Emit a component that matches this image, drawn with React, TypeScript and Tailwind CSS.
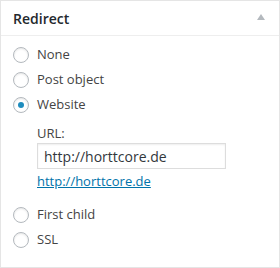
import React from "react";

function Radio({ checked = false, label }: { checked?: boolean; label: string }) {
  return (
    <div className="flex items-center h-[25px]">
      <span className="ml-[12px] w-[16px] h-[16px] rounded-full border border-[#b4b9be] bg-white shadow-[inset_0_1px_2px_rgba(0,0,0,0.1)] flex items-center justify-center shrink-0">
        {checked && <span className="w-[6px] h-[6px] rounded-full bg-[#1e8cbe]" />}
      </span>
      <span className="ml-[8px] text-[13px] text-[#444]">{label}</span>
    </div>
  );
}

export default function App() {
  return (
    <div
      className="w-[280px] h-[268px] bg-white border border-[#e5e5e5] flex flex-col"
      style={{ fontFamily: '"Open Sans", "Noto Sans", sans-serif' }}
    >
      <div className="h-[35px] border-b border-[#eeeeee] flex items-center justify-between pl-[12px] pr-[14px] shrink-0">
        <span className="text-[14px] font-semibold text-[#23282d]">Redirect</span>
        <svg width="8" height="6" viewBox="0 0 8 6" className="mb-[2px]">
          <polygon points="4,0 8,6 0,6" fill="#b4b9be" />
        </svg>
      </div>
      <div className="pt-[6px] flex flex-col">
        <Radio label="None" />
        <Radio label="Post object" />
        <Radio checked label="Website" />
        <div className="pl-[36px] pt-[7px] flex flex-col">
          <span className="text-[13px] text-[#444] leading-[18px]">URL:</span>
          <div className="mt-[1px] w-[189px] h-[26px] border border-[#dddddd] shadow-[inset_0_1px_2px_rgba(0,0,0,0.07)] flex items-center pl-[6px] text-[14px] text-[#32373c]">
            http://horttcore.de
          </div>
          <a className="mt-[2px] text-[13px] leading-[20px] text-[#0073aa] underline w-fit" href="#">
            http://horttcore.de
          </a>
        </div>
        <div className="mt-[11px]">
          <Radio label="First child" />
          <Radio label="SSL" />
        </div>
      </div>
    </div>
  );
}
